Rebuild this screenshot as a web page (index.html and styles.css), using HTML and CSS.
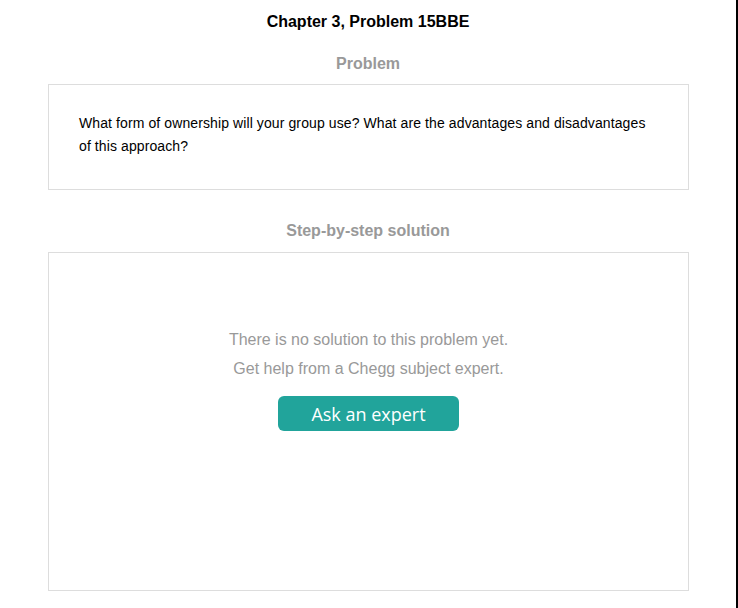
FILE: index.html
```html
<!DOCTYPE html>
<html>
<head>
<meta charset="utf-8">
<link rel="stylesheet" href="styles.css">
</head>
<body>
<div class="page">
  <h1 class="title">Chapter 3, Problem 15BBE</h1>
  <h2 class="section-title">Problem</h2>
  <div class="card problem-card">
    <p class="problem-text">What form of ownership will your group use? What are the advantages and disadvantages of this approach?</p>
  </div>
  <h2 class="section-title solution-title">Step-by-step solution</h2>
  <div class="card solution-card">
    <p class="empty-text">There is no solution to this problem yet.</p>
    <p class="empty-text">Get help from a Chegg subject expert.</p>
    <button class="ask-btn">Ask an expert</button>
  </div>
</div>
</body>
</html>
```
FILE: styles.css
```css
html, body {
  margin: 0;
  padding: 0;
  background: #fff;
}
body {
  font-family: "Liberation Sans", Arial, sans-serif;
}
.page {
  box-sizing: border-box;
  width: 738px;
  min-height: 608px;
  border-right: 2px solid #000;
  padding: 13px 0 0 48px;
}
.title {
  margin: 0 0 0 -48px;
  text-align: center;
  font-size: 16px;
  line-height: 18px;
  font-weight: bold;
  color: #000;
}
.section-title {
  margin: 24px 0 0 -48px;
  text-align: center;
  font-size: 16px;
  line-height: 18px;
  font-weight: bold;
  color: #999;
}
.solution-title {
  margin-top: 32px;
}
.card {
  box-sizing: border-box;
  width: 641px;
  border: 1px solid #ddd;
}
.problem-card {
  margin-top: 11px;
  height: 106px;
  padding: 27px 30px 0 30px;
}
.problem-text {
  margin: 0;
  font-size: 14px;
  line-height: 23px;
  letter-spacing: 0.1px;
  color: #000;
}
.solution-card {
  margin-top: 12px;
  height: 339px;
  padding-top: 72px;
  display: flex;
  flex-direction: column;
  align-items: center;
}
.empty-text {
  margin: 0;
  font-size: 16px;
  line-height: 29px;
  color: #999;
}
.ask-btn {
  margin-top: 13px;
  width: 181px;
  height: 35px;
  border: none;
  border-radius: 6px;
  background: #21a49b;
  color: #fff;
  font-family: "Open Sans", sans-serif;
  font-size: 18px;
  padding: 0;
  cursor: pointer;
}
```
